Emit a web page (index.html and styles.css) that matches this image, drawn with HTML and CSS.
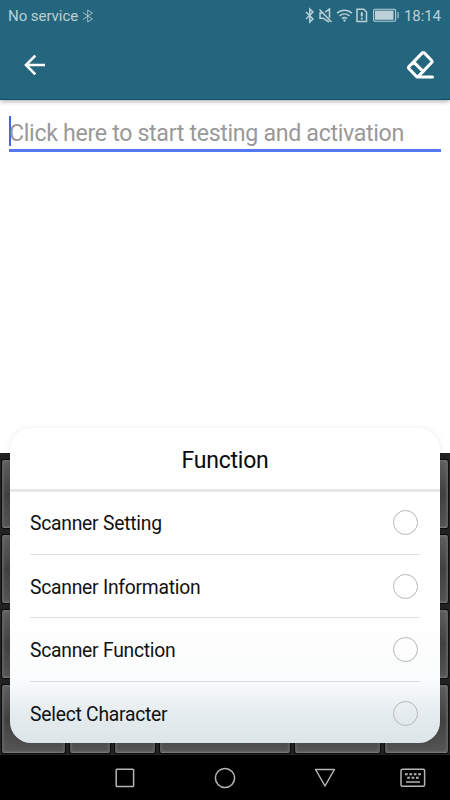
FILE: index.html
```html
<!DOCTYPE html>
<html lang="en">
<head>
<meta charset="utf-8">
<meta name="viewport" content="width=device-width">
<title>Function</title>
<link rel="stylesheet" href="styles.css">
</head>
<body>
<div class="screen">
  <header class="header">
    <div class="status">
      <div class="status-left">
        <span class="carrier">No service</span>
        <svg class="bt-thin" width="12" height="14" viewBox="0 0 12 14"><path d="M1 3.5 10.3 10 5.7 13V1l4.6 3L1 10.5"/></svg>
      </div>
      <div class="status-right">
        <svg width="10" height="15" viewBox="0 0 10 15"><path d="M1 4l7 7-3.2 3V1L8 4l-7 7"/></svg>
        <svg width="15" height="15" viewBox="0 0 15 15"><path d="M1.5 1.5 13.5 14M7.2 4.2 11.5 1v8.7M4.7 5H2v5.2h3L11 14M4.7 5l6.3 6.2"/></svg>
        <svg width="17" height="15" viewBox="0 0 17 15"><path d="M1 5.3c4.4-4.1 10.6-4.1 15 0M3.5 8c3-2.7 7-2.7 10 0M6 10.5c1.7-1.2 3.3-1.2 5 0"/><path class="solid" d="M6.7 11.7h3.6L8.5 14z"/></svg>
        <svg width="12" height="15" viewBox="0 0 12 15"><path d="M1 1.2h6.8L10.5 4v9.5H1z"/><path class="mark" d="M5.8 4.2v4.2M5.8 9.7v1.8"/></svg>
        <svg width="26" height="13" viewBox="0 0 26 13"><rect class="thin" x=".6" y=".2" width="22" height="12" rx="1.4"/><rect class="solid" x="2" y="1.6" width="18.5" height="9.2"/><path class="thin" d="M25 3.2v6"/></svg>
        <span class="clock">18:14</span>
      </div>
    </div>
    <div class="toolbar">
      <svg class="back" width="22" height="22" viewBox="0 0 22 22"><path d="M11.3 1.6 2 11l9.3 9.3M2 11h19"/></svg>
      <svg class="eraser" width="30" height="30" viewBox="0 0 30 30"><path d="M17.3 2.9q1-.9 2 0l7.3 7.6q.9 1 0 2L12.9 26.9h-1L4 18.8q-1-1.1 0-2.2zM8.8 12.1l9.4 9.5M12.5 26.9h15"/></svg>
    </div>
  </header>
  <main class="content">
    <div class="field"><span class="placeholder">Click here to start testing and activation</span></div>
  </main>
  <div class="keyboard">
    <div class="keys"><i></i><i></i></div>
    <div class="keys"><i></i><i></i></div>
    <div class="keys"><i></i><i></i></div>
    <div class="keys keys-bottom"><i></i><i></i><i></i><i></i><i></i><i></i></div>
  </div>
  <nav class="nav">
    <svg width="20" height="20" viewBox="0 0 20 20"><rect x="1.2" y="1.2" width="17.4" height="17.4" rx=".8"/></svg>
    <svg width="22" height="22" viewBox="0 0 22 22"><circle cx="11" cy="11" r="9.6"/></svg>
    <svg width="22" height="20" viewBox="0 0 22 20"><path d="M1.6 1.5h18.8L11 18z"/></svg>
    <svg width="26" height="20" viewBox="0 0 26 20"><rect x="1" y="1.2" width="23.6" height="17" rx="1.5"/><path class="dots" d="M5 6.2h16"/><path class="dots" d="M7.2 9.8h12.5"/><path d="M6 14h14"/></svg>
  </nav>
  <section class="dialog">
    <h1>Function</h1>
    <ul>
      <li><span>Scanner Setting</span><b></b></li>
      <li><span>Scanner Information</span><b></b></li>
      <li><span>Scanner Function</span><b></b></li>
      <li><span>Select Character</span><b></b></li>
    </ul>
  </section>
</div>
</body>
</html>
```
FILE: styles.css
```css
* { box-sizing: border-box; }
body { margin: 0; font-family: Roboto, "Liberation Sans", sans-serif; }
svg { display: block; flex: none; fill: none; overflow: visible; }
.screen { position: relative; display: flex; flex-direction: column; width: 450px; height: 800px; overflow: hidden; background: #fff; }

.header { flex: none; height: 100px; background: #23667d; border-bottom: 1px solid #0d4e68; box-shadow: 0 1px 5px rgba(0,0,0,.38); }
.status { display: flex; justify-content: space-between; height: 30px; padding: 0 10px 0 8px; color: #bcd0d8; }
.status-left, .status-right { display: flex; align-items: center; height: 31px; }
.status svg { stroke: #bcd0d8; stroke-width: 1.5; }
.carrier { font-size: 15px; letter-spacing: -.05px; }
.status .bt-thin { margin-left: 4px; stroke-width: .8; }
.status-right svg:nth-child(1) { margin-right: 3px; }
.status-right svg:nth-child(2) { margin-right: 3px; }
.status-right svg:nth-child(3) { margin-right: 3px; }
.status-right svg:nth-child(4) { margin-right: 5px; }
.status-right svg:nth-child(5) { margin-right: 5px; }
.status .solid { fill: #bcd0d8; stroke: none; }
.status .thin { stroke-width: 1.1; }
.status .mark { stroke-width: 2; }
.clock { width: 36px; font-size: 15px; letter-spacing: -.1px; white-space: nowrap; }
.toolbar { display: flex; justify-content: space-between; padding: 20px 15px 0 24px; }
.back { margin-top: 4px; stroke: #fff; stroke-width: 2.6; }
.eraser { stroke: #fff; stroke-width: 3; stroke-linejoin: round; stroke-linecap: round; }

.content { flex: none; height: 353px; padding: 16px 9px 0; }
.field { height: 36px; border-bottom: 3px solid #5578f6; }
.placeholder { display: block; width: 420px; height: 30px; line-height: 35px; border-left: 2px solid #3c64f5; font-size: 23.2px; letter-spacing: -.33px; color: #999; white-space: nowrap; text-indent: -2px; }

.keyboard { flex: none; display: grid; grid-template-rows: repeat(4, 68px); row-gap: 7px; height: 302px; padding: 7px 2px 0; background: #222; }
.keys { display: flex; justify-content: space-between; }
.keys i { width: 63px; height: 68px; border: 1px solid #606060; border-top-color: #707070; border-bottom-color: #777; border-radius: 2px; background: linear-gradient(#606060, #424242 50%, #555); box-shadow: 0 0 0 1px #0c0c0c, inset 0 0 3px #777; }
.keys-bottom i:nth-child(2), .keys-bottom i:nth-child(3) { width: 40px; }
.keys-bottom i:nth-child(4) { width: 130px; }
.keys-bottom i:nth-child(5) { width: 85px; }

.nav { display: flex; align-items: center; flex: 1; padding: 0 24px 0 115px; justify-content: space-between; background: #000; }
.nav svg { stroke: #b5b5b5; stroke-width: 1.5; stroke-linejoin: round; }
.nav svg:nth-child(1) { margin-right: 79px; }
.nav svg:nth-child(2) { margin-right: 78px; }
.nav svg:nth-child(3) { margin-right: 64px; }
.nav .dots { stroke-width: 2; stroke-dasharray: 2.7 1.7; }

.dialog { position: absolute; left: 10px; top: 428px; width: 430px; height: 315px; border-radius: 21px; overflow: hidden; background: linear-gradient(#fff 0, #fff 185px, #fafbfc 252px, #e5ecef 285px, #dce5e8 315px); box-shadow: 0 1px 9px rgba(0,0,0,.07), 0 0 1px rgba(0,0,0,.15); }
h1 { height: 63.5px; margin: 0; border-bottom: 3px solid #e7e7e7; text-align: center; font-size: 23px; letter-spacing: -.22px; font-weight: 400; line-height: 66px; color: #0a0a0a; }
ul { margin: 0; padding: 0 20px; list-style: none; }
li { display: flex; align-items: center; justify-content: space-between; height: 63.4px; padding: 1px 2.5px 0 0; border-bottom: 1px solid rgba(0,0,0,.12); font-size: 19.3px; letter-spacing: -.24px; color: #111; }
li:last-child { border: 0; }
li span { padding-top: 1.2px; }
li b { width: 25px; height: 25px; margin-top: -1px; border: 1px solid #b5b8b9; border-radius: 50%; }
```
